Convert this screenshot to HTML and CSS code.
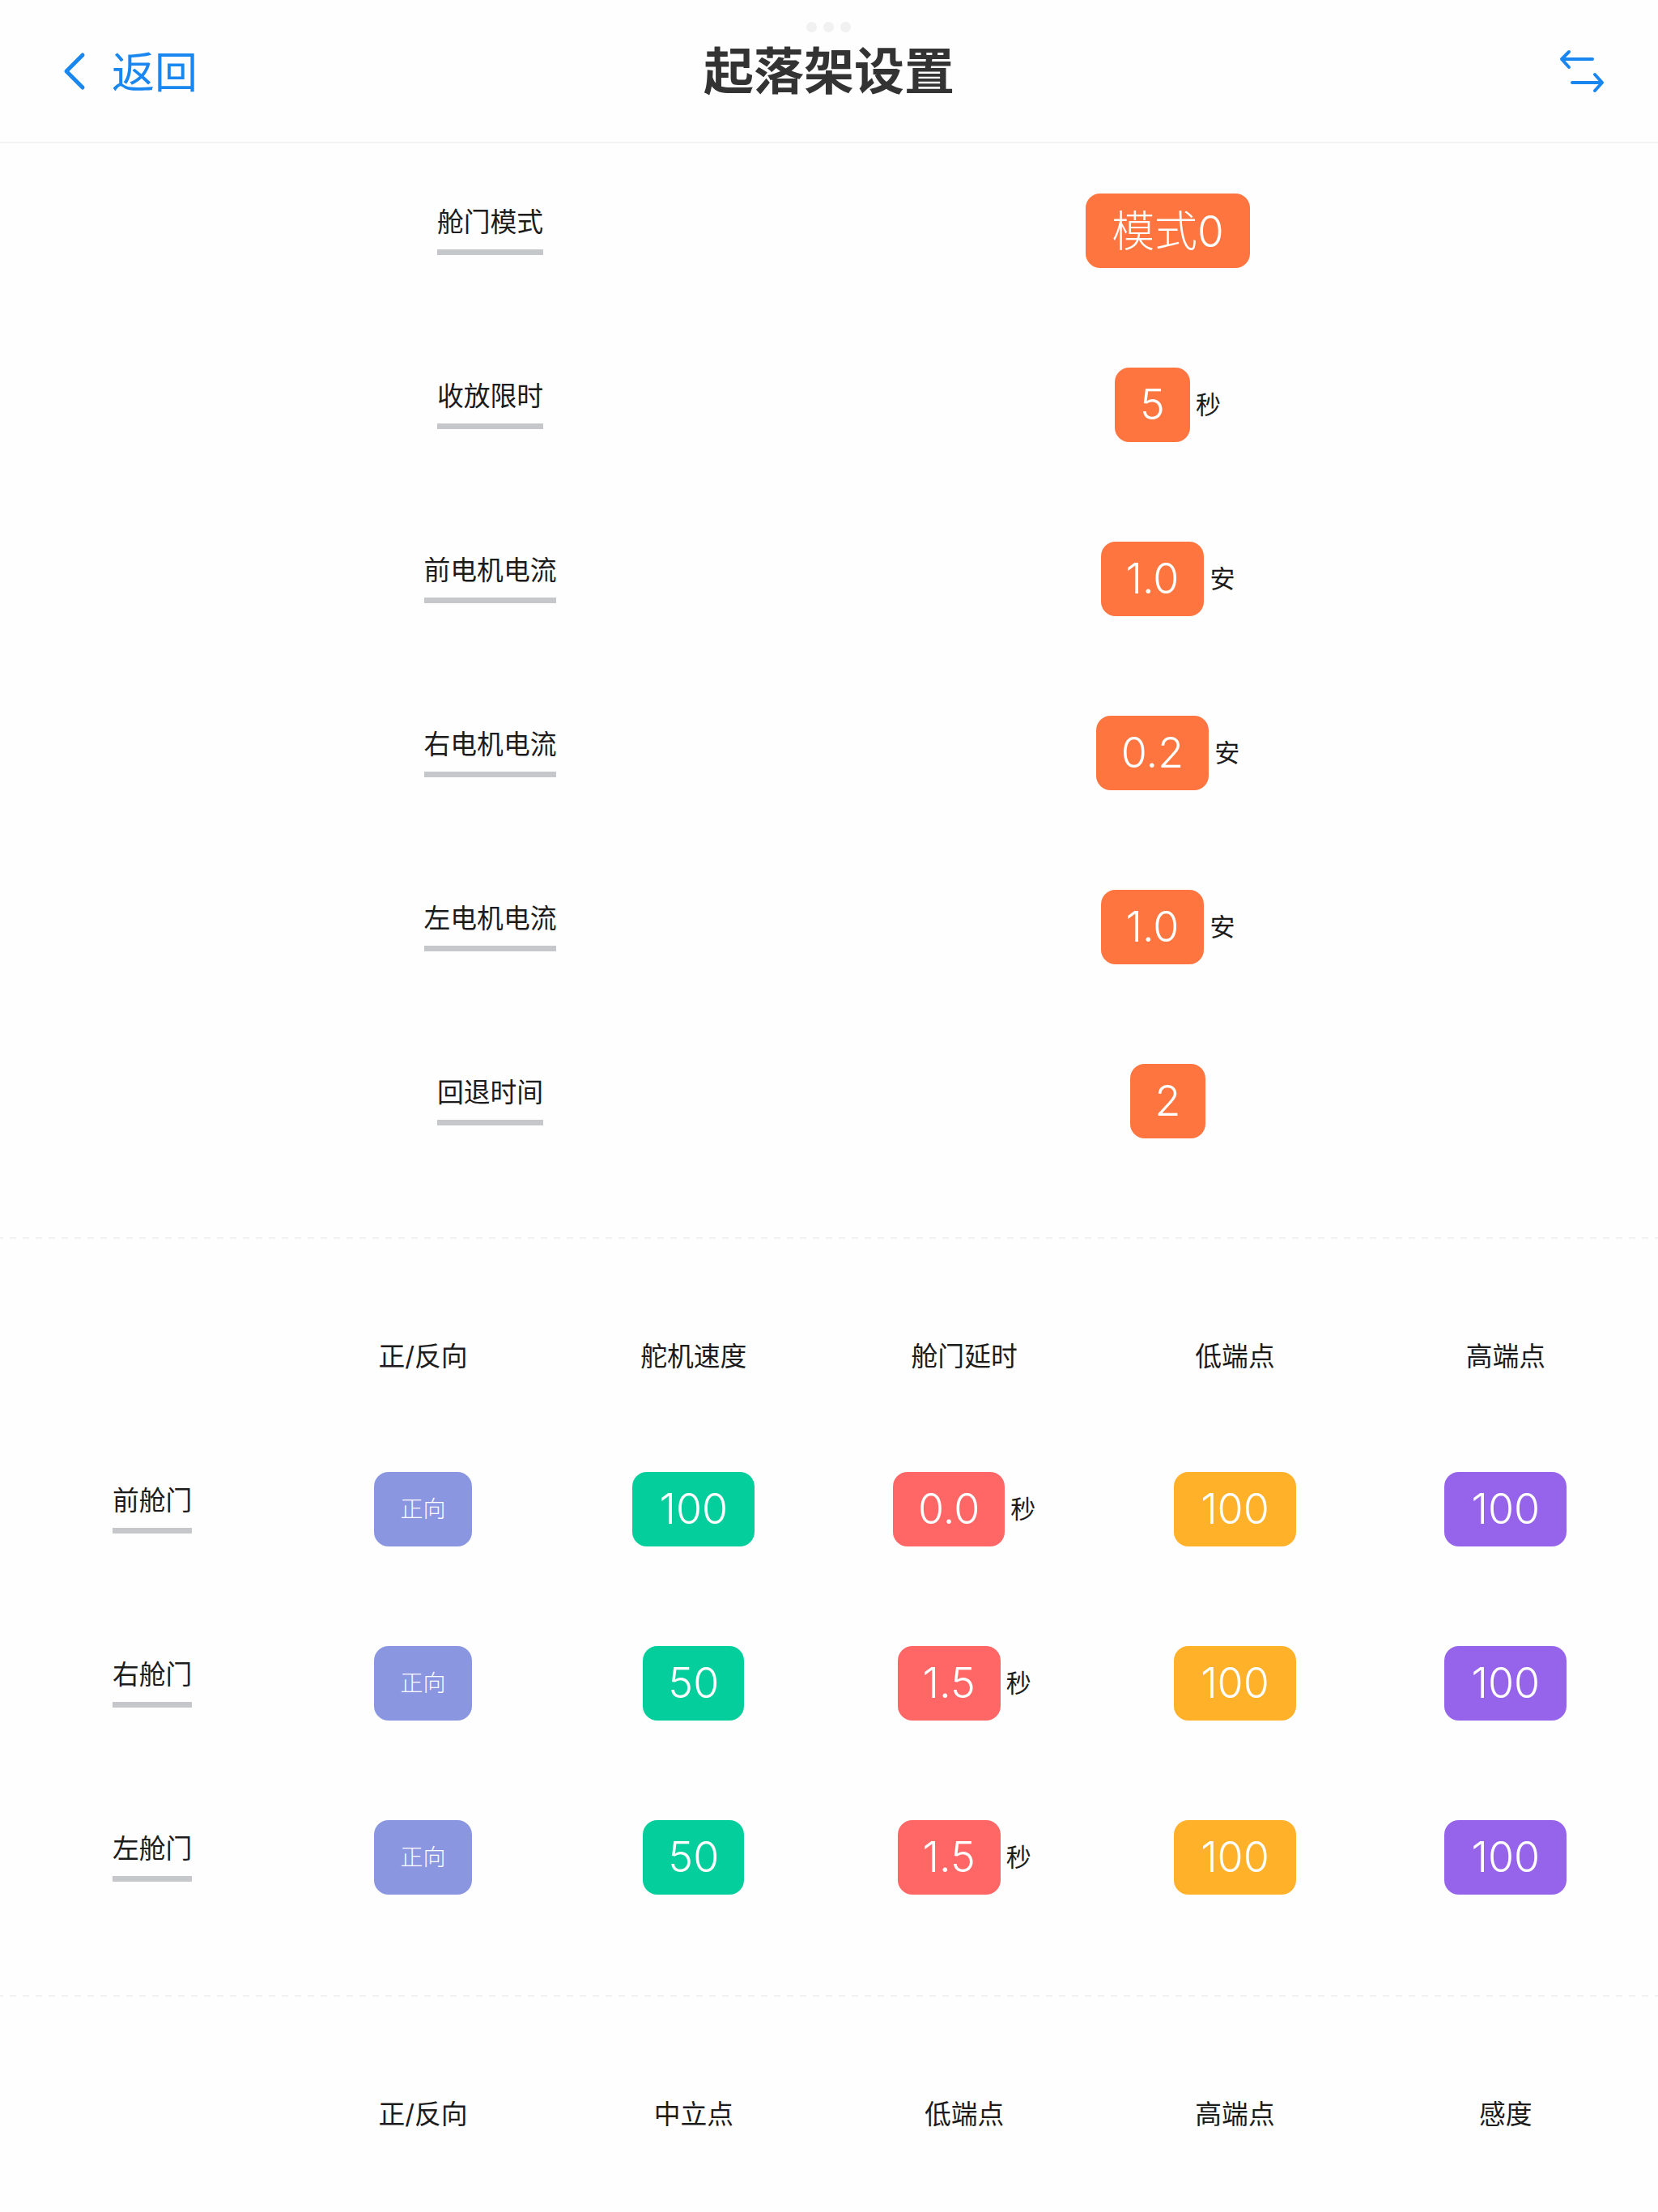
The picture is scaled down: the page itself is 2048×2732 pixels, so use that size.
FILE: index.html
```html
<!DOCTYPE html>
<html lang="zh-CN">
<head>
<meta charset="UTF-8" />
<meta name="viewport" content="width=device-width, initial-scale=1.0"/>
<title>起落架设置</title>
<link rel="stylesheet" href="styles.css">
</head>
<body>
<div class="page">
<div class="header">
  <div class="dots"><span></span><span></span><span></span></div>
  <div class="back">
    <svg class="back-icon" viewBox="0 0 28 48" width="28" height="48"><path d="M24 4 L4 24 L24 44" /></svg>
    <span>返回</span>
  </div>
  <div class="title">起落架设置</div>
  <svg class="swap-icon" viewBox="0 0 58 56" width="58" height="56">
    <path d="M42 13 H4 M13 4 L4 13 L13 23" />
    <path d="M17 42 H54 M45 32 L54 42 L45 52" />
  </svg>
</div>

<div class="settings">
  <div class="setting-row">
    <div class="cell"><div class="label">舱门模式</div></div>
    <div class="cell"><div class="btn orange mode">模式0</div></div>
  </div>
  <div class="setting-row">
    <div class="cell"><div class="label">收放限时</div></div>
    <div class="cell"><div class="btn orange">5</div><div class="unit">秒</div></div>
  </div>
  <div class="setting-row">
    <div class="cell"><div class="label">前电机电流</div></div>
    <div class="cell"><div class="btn orange">1.0</div><div class="unit">安</div></div>
  </div>
  <div class="setting-row">
    <div class="cell"><div class="label">右电机电流</div></div>
    <div class="cell"><div class="btn orange">0.2</div><div class="unit">安</div></div>
  </div>
  <div class="setting-row">
    <div class="cell"><div class="label">左电机电流</div></div>
    <div class="cell"><div class="btn orange">1.0</div><div class="unit">安</div></div>
  </div>
  <div class="setting-row">
    <div class="cell"><div class="label">回退时间</div></div>
    <div class="cell"><div class="btn orange">2</div></div>
  </div>
</div>

<div class="table doors">
  <div class="table-row head">
    <div class="cell"></div>
    <div class="cell">正/反向</div>
    <div class="cell">舵机速度</div>
    <div class="cell">舱门延时</div>
    <div class="cell">低端点</div>
    <div class="cell">高端点</div>
  </div>
  <div class="table-row">
    <div class="cell"><div class="label">前舱门</div></div>
    <div class="cell"><div class="btn blue">正向</div></div>
    <div class="cell"><div class="btn green full">100</div></div>
    <div class="cell"><div class="btn red">0.0</div><div class="unit">秒</div></div>
    <div class="cell"><div class="btn yellow full">100</div></div>
    <div class="cell"><div class="btn purple full">100</div></div>
  </div>
  <div class="table-row">
    <div class="cell"><div class="label">右舱门</div></div>
    <div class="cell"><div class="btn blue">正向</div></div>
    <div class="cell"><div class="btn green">50</div></div>
    <div class="cell"><div class="btn red">1.5</div><div class="unit">秒</div></div>
    <div class="cell"><div class="btn yellow full">100</div></div>
    <div class="cell"><div class="btn purple full">100</div></div>
  </div>
  <div class="table-row">
    <div class="cell"><div class="label">左舱门</div></div>
    <div class="cell"><div class="btn blue">正向</div></div>
    <div class="cell"><div class="btn green">50</div></div>
    <div class="cell"><div class="btn red">1.5</div><div class="unit">秒</div></div>
    <div class="cell"><div class="btn yellow full">100</div></div>
    <div class="cell"><div class="btn purple full">100</div></div>
  </div>
</div>

<div class="table tail">
  <div class="table-row head">
    <div class="cell"></div>
    <div class="cell">正/反向</div>
    <div class="cell">中立点</div>
    <div class="cell">低端点</div>
    <div class="cell">高端点</div>
    <div class="cell">感度</div>
  </div>
</div>
</div>
</body>
</html>
```

FILE: styles.css
```css
body {
  margin: 0;
  background-color: #fefefe;
  color: #1c1c1c;
  font-family: "Inter", "Noto Sans CJK SC", sans-serif;
}
.page {
  height: 2732px;
  overflow: hidden;
}

/* header */
.header {
  position: relative;
  height: 175px;
  display: grid;
  grid-template-columns: 1fr auto 1fr;
  align-items: center;
  padding: 0 65px;
  border-bottom: 2px solid #f3f3f3;
}
.dots {
  position: absolute;
  top: 27px;
  left: 996px;
  display: flex;
  gap: 8px;
}
.dots span {
  width: 13px;
  height: 13px;
  border-radius: 50%;
  background-color: #f1f1f1;
}
.back {
  display: flex;
  align-items: center;
  gap: 32px;
  margin-left: 13px;
  color: #1a86f0;
  font-size: 53px;
}
.back span {
  padding-bottom: 4px;
}
.back-icon path {
  fill: none;
  stroke: #1a86f0;
  stroke-width: 5;
  stroke-linecap: round;
  stroke-linejoin: round;
}
.title {
  font-size: 62px;
  font-weight: 700;
  color: #333;
  padding-bottom: 8px;
}
.swap-icon {
  justify-self: end;
}
.swap-icon path {
  fill: none;
  stroke: #1a86f0;
  stroke-width: 4;
  stroke-linecap: round;
  stroke-linejoin: round;
}

/* top settings */
.settings {
  padding: 0 187px 61px;
}
.setting-row {
  display: grid;
  grid-template-columns: 1fr 1fr;
  height: 215px;
}
.cell {
  display: flex;
  align-items: center;
  justify-content: center;
  gap: 7px;
}
.label {
  font-size: 32.8px;
  line-height: 40px;
  padding-bottom: 14px;
  border-bottom: 7px solid #c6c7cb;
}
.btn {
  box-sizing: border-box;
  height: 92px;
  padding: 0 31px;
  border-radius: 18px;
  display: flex;
  align-items: center;
  color: #fff;
  font-size: 52px;
  font-weight: 300;
}
.btn.mode {
  padding: 0 32px 6px;
  font-size: 53px;
}
.btn.full {
  padding: 0 33px;
}
.unit {
  font-size: 31px;
  padding-bottom: 5px;
}
.orange { background-color: #ff7540; }
.blue { background-color: #8b96e0; font-size: 28px; padding: 0 32px 3px; }
.green { background-color: #04cf9c; }
.red { background-color: #ff6767; }
.yellow { background-color: #ffb12a; }
.purple { background-color: #9664ea; }

/* door tables */
.table {
  padding: 2px 21px 0;
  background-image: repeating-linear-gradient(90deg, #f1f1f1 0 4px, transparent 4px 12px, #f1f1f1 12px 16px);
  background-size: 100% 2px;
  background-repeat: no-repeat;
}
.doors {
  padding-bottom: 63px;
}
.table-row {
  display: grid;
  grid-template-columns: repeat(6, 1fr);
  height: 215px;
}
.table-row.head {
  height: 226px;
  font-size: 32.8px;
  align-items: start;
}
.table-row.head .cell {
  margin-top: 121px;
  line-height: 48px;
}
```
